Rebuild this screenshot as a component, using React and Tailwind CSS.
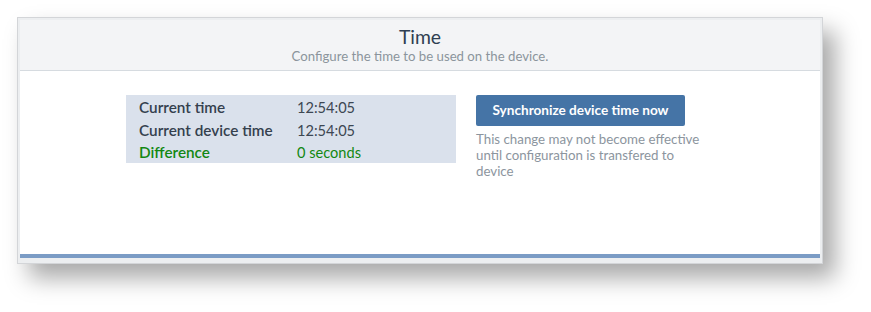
export default function App() {
    const rows = [
        { label: 'Current time', value: '12:54:05' },
        { label: 'Current device time', value: '12:54:05' },
        { label: 'Difference', value: '0 seconds', ok: true },
    ];

    return (
        <div className="h-[312px] w-[871px] bg-white pl-[17px] pt-[17px]" style={{ fontFamily: 'Lato, "Noto Sans", sans-serif' }}>
            <div className="flex h-[247px] w-[806px] flex-col border border-[#d3d5d8] bg-[#eceef0] px-[2px] pt-[2px] pb-[5px] shadow-[12px_14px_22px_rgba(0,0,0,0.34)]">
                <div className="flex flex-1 flex-col bg-white">
                    {/* header */}
                    <div className="flex h-[51px] flex-col items-center border-b border-[#d6dbe0] bg-[#f3f4f6]">
                        <div className="mt-[5px] text-[19.4px] leading-[23px] text-[#2f3f52]">Time</div>
                        <div className="text-[13.2px] leading-[16px] text-[#8b949c]">
                            Configure the time to be used on the device.
                        </div>
                    </div>

                    {/* body */}
                    <div className="flex flex-1 items-start gap-[20px] pl-[106px] pt-[24px]">
                        <div className="h-[68px] w-[330px] bg-[#dae1ec] pt-[1px] pl-[13px]">
                            {rows.map((row) => (
                                <div key={row.label} className="flex h-[22.5px] items-baseline overflow-hidden leading-[22.5px]">
                                    <div className={`w-[158px] text-[15.3px] font-semibold ${row.ok ? 'text-[#128812]' : 'text-[#34404e]'}`}>
                                        {row.label}
                                    </div>
                                    <div className={`text-[14.6px] ${row.ok ? 'text-[#128812]' : 'text-[#3d4753]'}`}>{row.value}</div>
                                </div>
                            ))}
                        </div>
                        <div className="w-[232px]">
                            <button className="flex h-[31px] w-[209px] items-center justify-center rounded-[2px] bg-[#4574a6] text-[13.6px] font-bold text-white">
                                Synchronize device time now
                            </button>
                            <div className="mt-[5px] text-[13.3px] leading-[16px] text-[#8c959e]">
                                This change may not become effective until configuration is transfered to device
                            </div>
                        </div>
                    </div>

                    <div className="h-[4px] bg-[#7b9cc5]" />
                </div>
            </div>
        </div>
    );
}
